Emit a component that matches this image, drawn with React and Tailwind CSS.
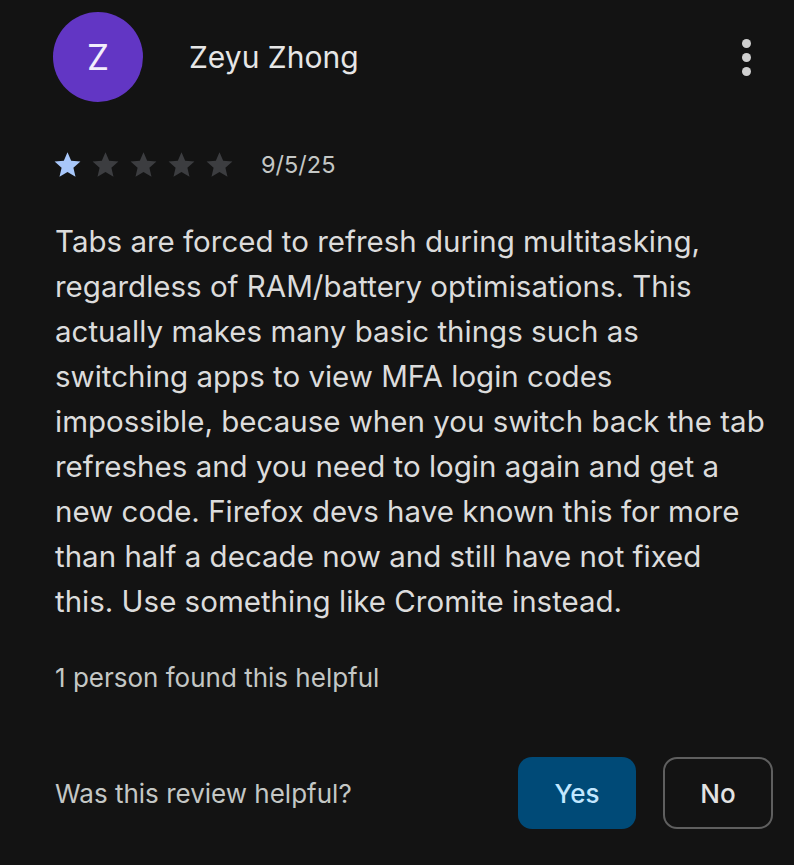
const Star = ({ filled }) => (
  <svg viewBox="0 0 24 24" className="w-[31px] h-[31px]">
    <path
      d="M12 2.5l2.85 6.6 7.15.62-5.43 4.7 1.63 7.03L12 17.77l-6.2 3.68 1.63-7.03L2 9.72l7.15-.62L12 2.5z"
      fill={filled ? "#a8c7fa" : "#3c3d40"}
    />
  </svg>
);

const lines = [
  "Tabs are forced to refresh during multitasking,",
  "regardless of RAM/battery optimisations. This",
  "actually makes many basic things such as",
  "switching apps to view MFA login codes",
  "impossible, because when you switch back the tab",
  "refreshes and you need to login again and get a",
  "new code. Firefox devs have known this for more",
  "than half a decade now and still have not fixed",
  "this. Use something like Cromite instead.",
];

export default function App() {
  return (
    <div
      className="w-[794px] h-[865px] bg-[#131313] text-[#e3e3e3] overflow-hidden"
      style={{ fontFamily: "Inter, Roboto, sans-serif" }}
    >
      <div className="flex items-center pl-[53px] pr-[43px] pt-[12px]">
        <div className="w-[90px] h-[90px] rounded-full bg-[#6236c4] flex items-center justify-center">
          <span className="text-[35px] text-[#f2eefc] leading-none">Z</span>
        </div>
        <p className="ml-[46px] text-[30px] text-[#e6e6e6] flex-1">Zeyu Zhong</p>
        <div className="flex flex-col gap-[5px] items-center">
          <span className="w-[9px] h-[9px] rounded-full bg-[#d0d0d0]" />
          <span className="w-[9px] h-[9px] rounded-full bg-[#d0d0d0]" />
          <span className="w-[9px] h-[9px] rounded-full bg-[#d0d0d0]" />
        </div>
      </div>

      <div className="flex items-center pl-[52px] mt-[45px]">
        <div className="flex gap-[7px]">
          <Star filled />
          <Star />
          <Star />
          <Star />
          <Star />
        </div>
        <span className="ml-[26px] text-[23.5px] text-[#c4c7c5]">9/5/25</span>
      </div>

      <div className="pl-[55px] mt-[37px] text-[29.5px] leading-[45px] text-[#dcdcdc]">
        {lines.map((l) => (
          <p key={l} className="whitespace-nowrap">{l}</p>
        ))}
      </div>

      <p className="pl-[55px] mt-[34px] text-[26px] text-[#c4c7c5]">1 person found this helpful</p>

      <div className="flex items-center pl-[55px] pr-[21px] mt-[60px]">
        <p className="flex-1 text-[26px] text-[#c4c7c5]">Was this review helpful?</p>
        <button className="w-[118px] h-[72px] rounded-[14px] bg-[#004a77] text-[#c2e7ff] text-[26px] font-medium">
          Yes
        </button>
        <button className="ml-[27px] w-[110px] h-[72px] rounded-[14px] border-2 border-[#5f5f5f] text-[#e3e3e3] text-[26px] font-medium">
          No
        </button>
      </div>
    </div>
  );
}
